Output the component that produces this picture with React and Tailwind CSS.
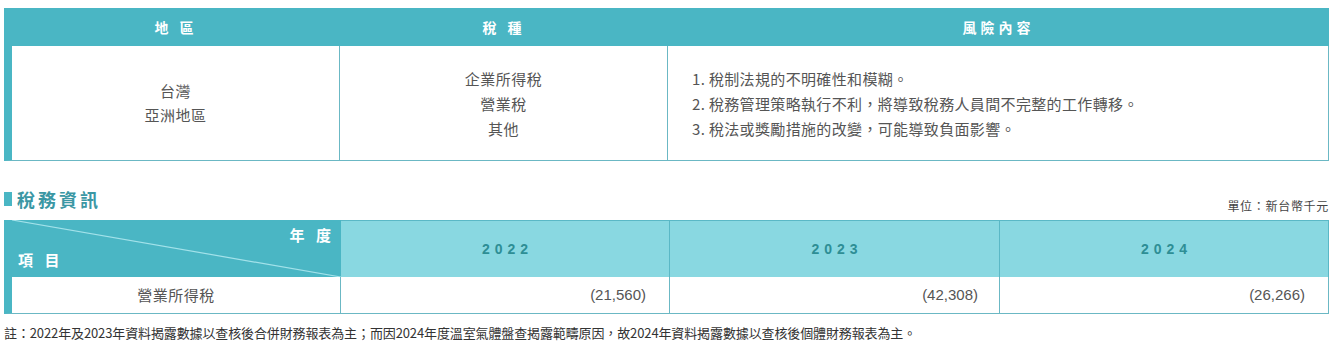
export default function App() {
  const cjk = { fontFamily: '"Noto Sans CJK TC", "Noto Sans", sans-serif' };
  const risks = [
    "1. 稅制法規的不明確性和模糊。",
    "2. 稅務管理策略執行不利，將導致稅務人員間不完整的工作轉移。",
    "3. 稅法或獎勵措施的改變，可能導致負面影響。",
  ];
  return (
    <div className="bg-white w-[1332px] h-[342px] pl-[4px] pr-[3px] pt-[8px] text-[#555]" style={cjk}>
      {/* top table */}
      <div className="grid grid-cols-[336px_328px_661px]">
        <div className="h-[38px] bg-[#4ab6c4] flex items-center justify-center text-white font-bold text-[14px] tracking-[4px] pl-[8px]">地 區</div>
        <div className="h-[38px] bg-[#4ab6c4] flex items-center justify-center text-white font-bold text-[14px] tracking-[4px]">稅 種</div>
        <div className="h-[38px] bg-[#4ab6c4] flex items-center justify-center text-white font-bold text-[14px] tracking-[4px]">風險內容</div>

        <div className="h-[115px] border-l-[8px] border-l-[#4ab6c4] border-r border-r-[#6bb8c4] border-b border-b-[#6bb8c4] flex flex-col items-center justify-center text-[15px] leading-[24px] tracking-[0.5px]">
          <div>台灣</div>
          <div>亞洲地區</div>
        </div>
        <div className="h-[115px] border-r border-r-[#6bb8c4] border-b border-b-[#6bb8c4] flex flex-col items-center justify-center text-[15px] leading-[25px] tracking-[0.5px]">
          <div>企業所得稅</div>
          <div>營業稅</div>
          <div>其他</div>
        </div>
        <div className="h-[115px] border-r border-r-[#6bb8c4] border-b border-b-[#6bb8c4] flex flex-col justify-center pl-[24px] text-[15px] leading-[25px] tracking-[0.35px]">
          {risks.map((r) => (
            <div key={r}>{r}</div>
          ))}
        </div>
      </div>

      {/* title row */}
      <div className="mt-[27px] flex justify-between items-start">
        <div className="flex items-center h-[22px]">
          <div className="w-[8px] h-[14px] bg-[#4ab6c4]"></div>
          <div className="ml-[5px] text-[18px] font-bold tracking-[3px] text-[#3b97a4] leading-[22px]">稅務資訊</div>
        </div>
        <div className="mt-[10px] text-[12px] leading-[16px] text-[#444] tracking-[0.7px]">單位：新台幣千元</div>
      </div>

      {/* second table */}
      <div className="mt-[6px] grid grid-cols-[337px_329px_330px_329px]">
        <div className="relative h-[57px] bg-[#4ab6c4] text-white font-bold text-[15px]">
          <svg className="absolute inset-0" width="337" height="57" viewBox="0 0 337 57">
            <line x1="8" y1="0" x2="337" y2="57" stroke="#a3e2ea" strokeWidth="1.2" />
          </svg>
          <div className="absolute right-[6px] top-[5px] leading-[20px] tracking-[4px]">年 度</div>
          <div className="absolute left-[14px] top-[30px] leading-[20px] tracking-[4px]">項 目</div>
        </div>
        {["2022", "2023", "2024"].map((y) => (
          <div key={y} className="h-[57px] bg-[#89d8e1] border-t border-t-[#5ab8c6] border-r border-r-[#5ab8c6] flex items-center justify-center font-bold text-[14px] tracking-[5px] text-[#2e8e95] pl-[5px]" style={{ fontFamily: '"Liberation Sans", Arial, sans-serif' }}>
            {y}
          </div>
        ))}
        <div className="h-[37px] border-l-[8px] border-l-[#4ab6c4] border-r border-r-[#6bb8c4] border-b border-b-[#6bb8c4] flex items-center justify-center text-[15px] tracking-[0.5px]">營業所得稅</div>
        {["(21,560)", "(42,308)", "(26,266)"].map((v, i) => (
          <div key={v} className={`h-[37px] border-r border-r-[#6bb8c4] border-b border-b-[#6bb8c4] flex items-center justify-end text-[15px] ${i === 1 ? "pr-[21px]" : "pr-[23px]"}`} style={{ fontFamily: '"Liberation Sans", Arial, sans-serif' }}>
            {v}
          </div>
        ))}
      </div>

      <div className="mt-[9px] text-[13px] leading-[20px] text-[#333] tracking-[-0.12px]">
        註：2022年及2023年資料揭露數據以查核後合併財務報表為主；而因2024年度溫室氣體盤查揭露範疇原因，故2024年資料揭露數據以查核後個體財務報表為主。
      </div>
    </div>
  );
}
